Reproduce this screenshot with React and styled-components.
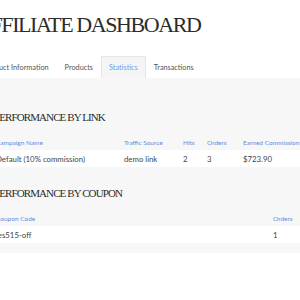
import React from 'react';
import styled, {createGlobalStyle} from 'styled-components';

const GlobalStyle = createGlobalStyle`
    body {
        margin: 0;
        background: #fff;
        font-family: Lato, "Open Sans", sans-serif;
    }
`;

// the screenshot is a crop of a wider page, so the page starts left of the frame
const Page = styled.div`
    width: 420px;
    margin-left: -24px;
`;

const Title = styled.h1`
    margin: 0;
    padding: 14px 0 0 0;
    height: 42px;
    font-family: "Liberation Serif", serif;
    font-weight: normal;
    font-size: 22px;
    line-height: 22px;
    color: #2b2b2b;
    letter-spacing: -1.4px;
    white-space: nowrap;
`;

const Tabs = styled.div`
    display: flex;
    height: 22px;
`;

const Tab = styled.div`
    padding: 0 7px;
    font-size: 7.3px;
    line-height: 21px;
    color: ${p => (p.active ? '#6d9ee6' : '#555')};
    background: ${p => (p.active ? '#f5f5f7' : 'transparent')};
    border: 1px solid ${p => (p.active ? '#e6e6ea' : 'transparent')};
    border-bottom: none;
    white-space: nowrap;
`;

const Panel = styled.div`
    background: #f7f7f7;
    padding: 28px 0 10px 18px;
    box-shadow: 0 2px 2px rgba(0, 0, 0, 0.05);
`;

const SectionTitle = styled.h2`
    margin: 0;
    height: 22px;
    font-family: "Liberation Serif", serif;
    font-weight: normal;
    font-size: 11px;
    line-height: 22px;
    color: #2b2b2b;
    letter-spacing: -0.9px;
    white-space: nowrap;
`;

const Table = styled.div`
    margin-top: 6px;
    margin-bottom: 15px;

    &:last-child {
        margin-bottom: 0;
    }
`;

const Row = styled.div`
    display: grid;
    grid-template-columns: ${p => p.cols};
    height: ${p => (p.head ? 16 : 17)}px;
    align-items: center;
    background: ${p => (p.head ? 'transparent' : '#fff')};
    padding-left: 2px;
`;

const HeadCell = styled.div`
    font-size: 6.5px;
    color: #5b8fe0;
    white-space: nowrap;
`;

const Cell = styled.div`
    font-size: 7.8px;
    color: #444;
    white-space: nowrap;
`;

const linkCols = '128px 59px 24px 36px 1fr';
const couponCols = '277px 1fr';

export default function App() {
    return (
        <Page>
            <GlobalStyle />
            <Title>AFFILIATE DASHBOARD</Title>
            <Tabs>
                <Tab>Product Information</Tab>
                <Tab>Products</Tab>
                <Tab active>Statistics</Tab>
                <Tab>Transactions</Tab>
            </Tabs>
            <Panel>
                <SectionTitle>PERFORMANCE BY LINK</SectionTitle>
                <Table>
                    <Row head cols={linkCols}>
                        <HeadCell>Campaign Name</HeadCell>
                        <HeadCell>Traffic Source</HeadCell>
                        <HeadCell>Hits</HeadCell>
                        <HeadCell>Orders</HeadCell>
                        <HeadCell>Earned Commissions</HeadCell>
                    </Row>
                    <Row cols={linkCols}>
                        <Cell>Default (10% commission)</Cell>
                        <Cell>demo link</Cell>
                        <Cell>2</Cell>
                        <Cell>3</Cell>
                        <Cell>$723.90</Cell>
                    </Row>
                </Table>
                <SectionTitle>PERFORMANCE BY COUPON</SectionTitle>
                <Table>
                    <Row head cols={couponCols}>
                        <HeadCell>Coupon Code</HeadCell>
                        <HeadCell>Orders</HeadCell>
                    </Row>
                    <Row cols={couponCols}>
                        <Cell>les515-off</Cell>
                        <Cell>1</Cell>
                    </Row>
                </Table>
            </Panel>
        </Page>
    );
}
